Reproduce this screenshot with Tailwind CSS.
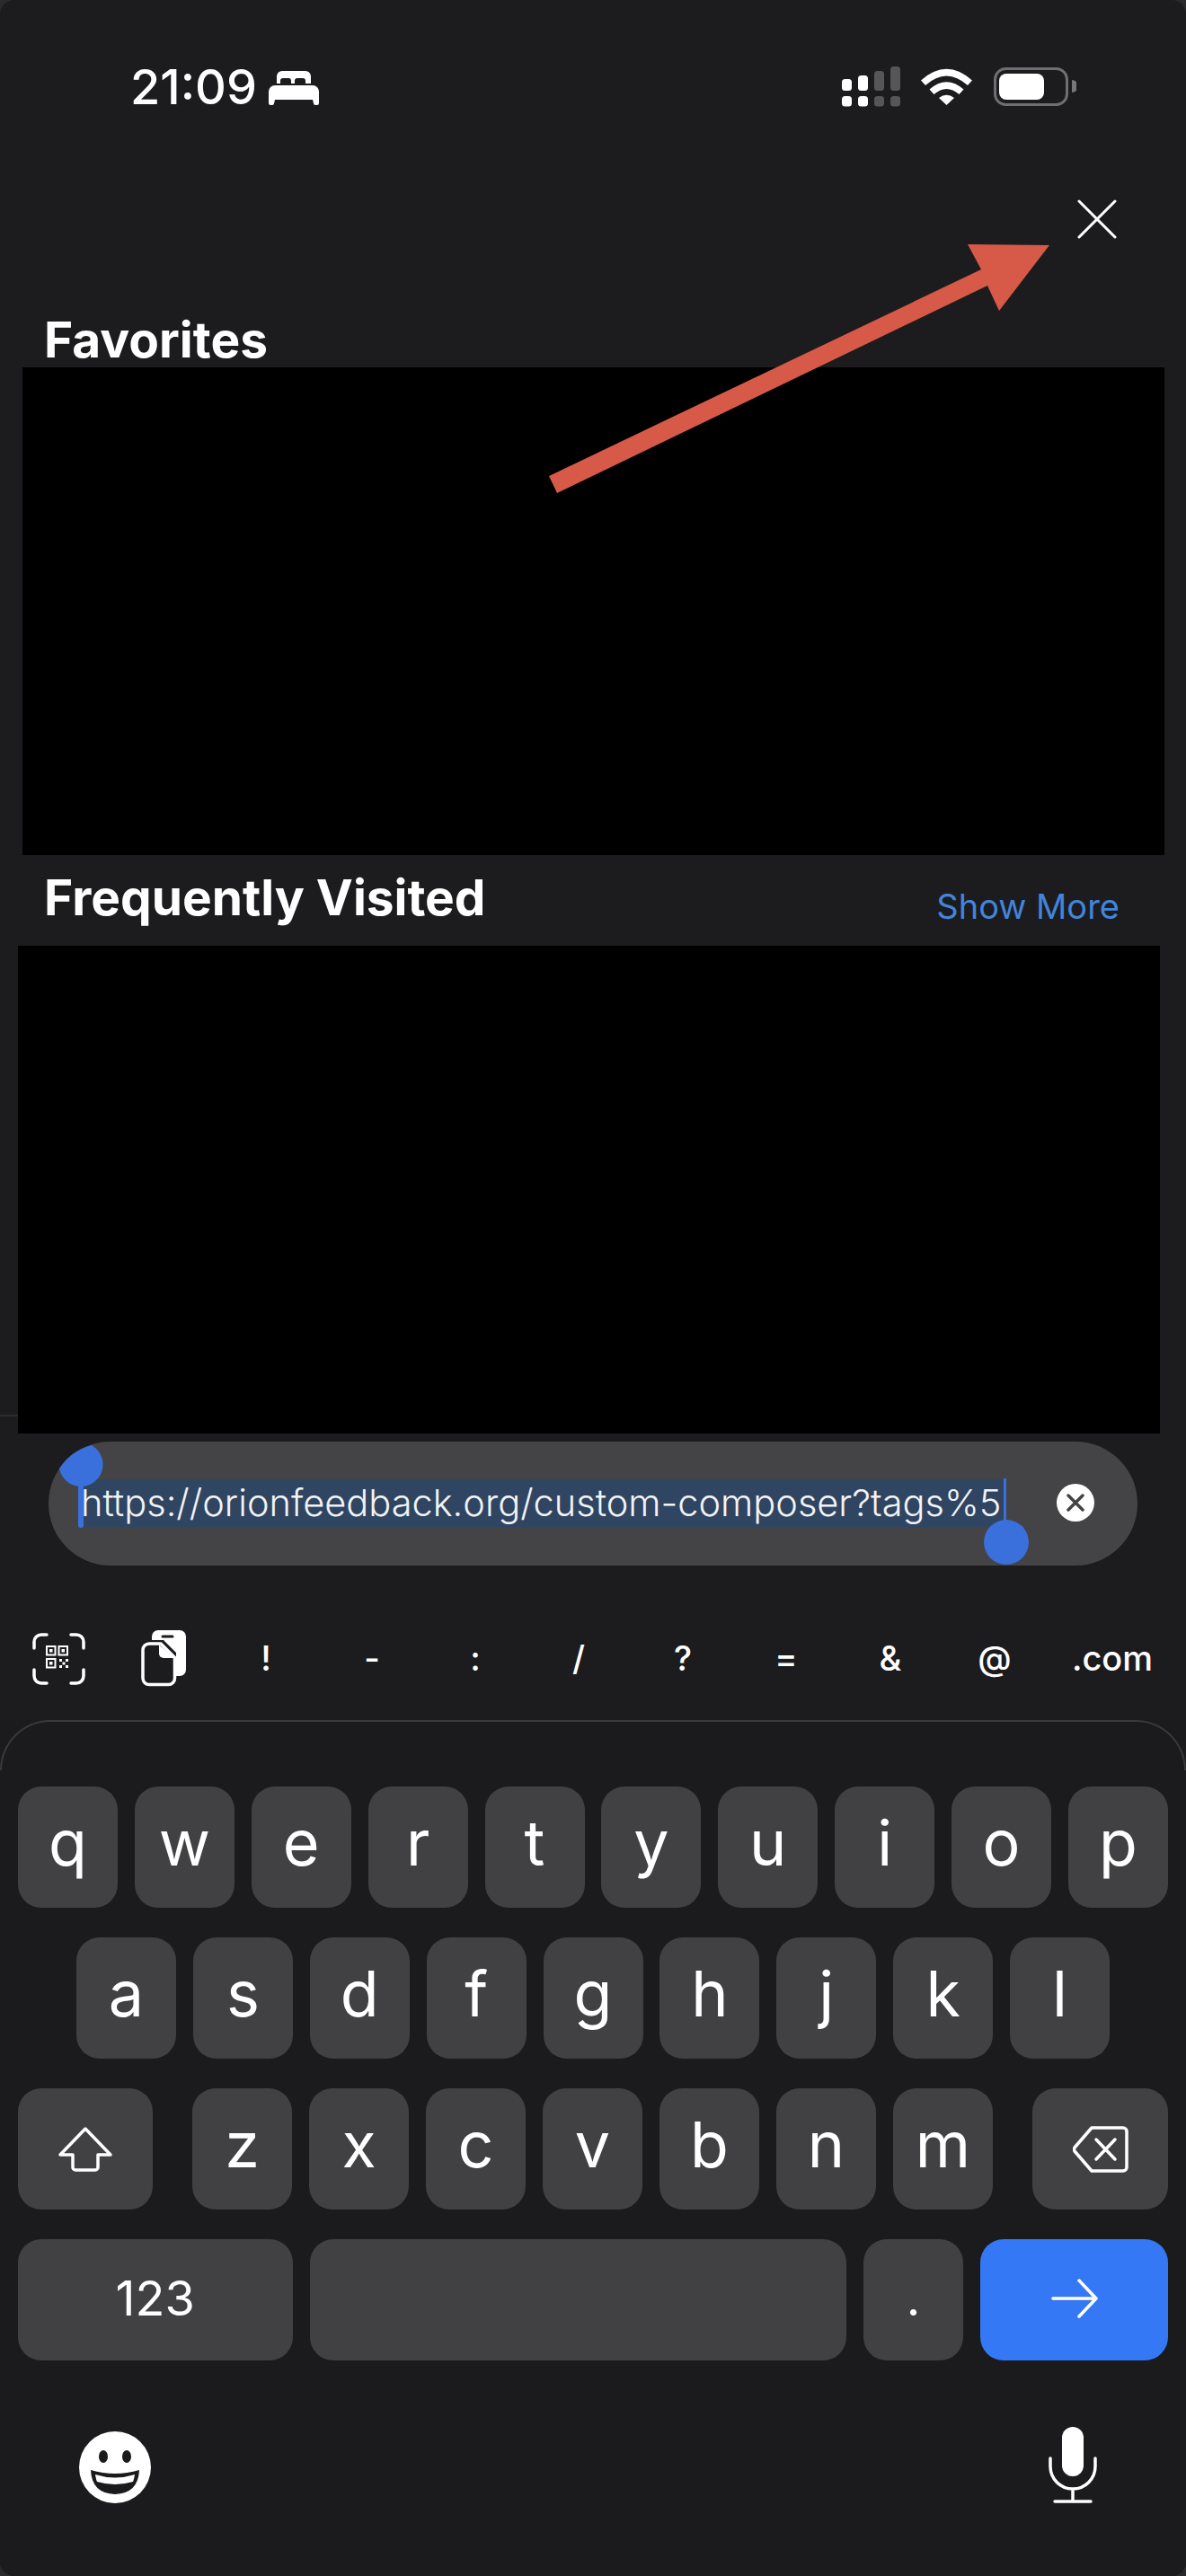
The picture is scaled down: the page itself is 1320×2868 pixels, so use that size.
<!DOCTYPE html>
<html lang="en">
<head>
    <meta charset="UTF-8">
    <meta name="viewport" content="width=device-width, initial-scale=1.0">
    <title>Orion start page</title>
    <script src="https://cdn.jsdelivr.net/npm/@tailwindcss/browser@4"></script>
</head>
<body class="bg-[#2a2a2c]">
    <div class="relative w-[1320px] h-[2868px] overflow-hidden rounded-[16px] bg-[#1c1c1e] text-white font-['Inter','Liberation_Sans',sans-serif]">

        <!-- status bar -->
        <div class="h-[200px] pt-[74px] pl-[145px] pr-[122px] flex items-start justify-between">
            <div class="flex items-start gap-[13px]">
                <span class="text-[54px] leading-[46px] font-medium">21:09</span>
                <svg class="w-[56px] h-[38px] mt-[5px]" viewBox="0 0 56 38" fill="#fff">
                    <path d="M9 14V6a6 6 0 0 1 6-6h26a6 6 0 0 1 6 6v8h-6v-3a3 3 0 0 0-3-3h-6a3 3 0 0 0-3 3v3h-4v-3a3 3 0 0 0-3-3h-6a3 3 0 0 0-3 3v3z"/>
                    <path d="M7 16h42a7 7 0 0 1 7 7v13a2 2 0 0 1-2 2h-2a2 2 0 0 1-2-2l-1-4H7l-1 4a2 2 0 0 1-2 2H2a2 2 0 0 1-2-2V23a7 7 0 0 1 7-7z"/>
                </svg>
            </div>
            <svg class="w-[262px] h-[46px]" viewBox="936 74 262 46">
                <g fill="#fff">
                    <rect x="937" y="88" width="11" height="13" rx="3.500"/><rect x="937" y="107" width="11" height="11.500" rx="3.500"/>
                    <rect x="955" y="84" width="11" height="17" rx="3.500"/><rect x="955" y="107" width="11" height="11.500" rx="3.500"/>
                </g>
                <g fill="#565658">
                    <rect x="973" y="79" width="11" height="22" rx="3.500"/><rect x="973" y="107" width="11" height="11.500" rx="3.500"/>
                    <rect x="991" y="74" width="11" height="27" rx="3.500"/><rect x="991" y="107" width="11" height="11.500" rx="3.500"/>
                </g>
                <g fill="#fff">
                    <path d="M1025 89.500 Q1053.500 64 1082 89.500 L1077 95 Q1053.500 74 1030 95z"/>
                    <path d="M1034.500 99.500 Q1053.500 83 1072.500 99.500 L1067.500 105 Q1053.500 93 1039.500 105z"/>
                    <path d="M1045 109 Q1053.500 102.500 1062 109 L1053.500 117z"/>
                </g>
                <rect x="1107.500" y="76.500" width="80" height="40" rx="12" fill="none" stroke="#6f6f71" stroke-width="3"/>
                <rect x="1112" y="82" width="50" height="29" rx="8" fill="#fff"/>
                <path d="M1193 89a7 7 0 0 1 0 14z" fill="#77777a"/>
            </svg>
        </div>

        <!-- close button -->
        <div class="h-[150px] flex justify-end pr-[77px] pt-[22px]">
            <svg class="w-[44px] h-[44px]" viewBox="0 0 44 44" fill="none" stroke="#fff" stroke-width="3" stroke-linecap="round">
                <path d="M2 2l40 40M42 2L2 42"/>
            </svg>
        </div>

        <h2 class="h-[59px] pl-[49px] text-[55px] leading-[56px] font-bold">Favorites</h2>
        <div class="ml-[25px] w-[1271px] h-[543px] bg-black"></div>

        <div class="h-[101px] pl-[49px] pr-[74px] flex items-start justify-between">
            <h2 class="pt-[17px] text-[55px] leading-[60px] font-bold">Frequently Visited</h2>
            <button class="pt-[33px] text-[38px] leading-[48px] text-[#4285dc]">Show More</button>
        </div>
        <div class="relative ml-[20px] w-[1271px] h-[543px] bg-black"></div>
        <div class="absolute left-0 top-[1575px] w-[20px] h-[2px] bg-[#2c2c2e]"></div>

        <!-- address field -->
        <div class="relative ml-[54px] mt-[9px] w-[1212px] h-[138px] rounded-[69px] bg-[#444345]">
            <div class="absolute left-[34px] top-[42px] w-[1030px] h-[53px] bg-[#2f4562]"></div>
            <div class="absolute left-[36px] top-[42px] h-[53px] leading-[53px] text-[41.5px] whitespace-nowrap text-[#f2f3f5] font-light">https://orionfeedback.org/custom-composer?tags%5</div>
            <svg class="absolute left-[10px] top-[2px] w-[70px] h-[100px]" viewBox="0 0 70 100">
                <path d="M2 28 Q15 8 38 2 A24.500 24.500 0 1 1 2 28z" fill="#3a70dc"/>
                <rect x="23" y="40" width="6" height="54" rx="3" fill="#3a70dc"/>
            </svg>
            <div class="absolute left-[1063px] top-[41px] w-[3px] h-[60px] bg-[#3a70dc]"></div>
            <div class="absolute left-[1041px] top-[87px] w-[50px] h-[50px] rounded-full bg-[#3a70dc]"></div>
            <div class="absolute left-[1122px] top-[47px] w-[42px] h-[42px] rounded-full bg-white flex items-center justify-center">
                <svg class="w-[20px] h-[20px]" viewBox="0 0 20 20" stroke="#444345" stroke-width="3.500" stroke-linecap="round"><path d="M2 2l16 16M18 2L2 18"/></svg>
            </div>
        </div>

        <!-- accessory row -->
        <div class="relative h-[172px]">
            <svg class="absolute left-[36px] top-[74px] w-[60px] h-[60px]" viewBox="0 0 60 60" fill="none" stroke="#fff">
                <path stroke-width="3.500" stroke-linecap="round" d="M16 3H10a8 8 0 0 0-8 8v7M43 3h6a8 8 0 0 1 8 8v7M16 57H10a8 8 0 0 1-8-8v-7M43 57h6a8 8 0 0 0 8-8v-7"/>
                <path stroke-width="2" d="M16 16h9.500v9.500H16zM29.500 16h9.500v9.500h-9.500zM16 30h9.500v9.500H16z"/>
                <path fill="#fff" stroke="none" d="M19 19h3.500v3.500H19zM32.500 19H36v3.500h-3.500zM19 33h3.500v3.500H19zM30 30h3v3h-3zM37 30h3v3h-3zM33.500 33.500h3v3h-3zM30 37h3v3h-3zM37 37h3v3h-3z"/>
            </svg>
            <svg class="absolute left-[156px] top-[70px] w-[54px] h-[66px]" viewBox="156 1813 54 66">
                <path fill="#fff" fill-rule="evenodd" d="M176 1815h24a7 7 0 0 1 7 7v37a7 7 0 0 1-7 7h-4v-26l-14-14h-13v-4a7 7 0 0 1 7-7zM181 1820.500a1.500 1.500 0 0 0 0 3h11a1.500 1.500 0 0 0 0-3z"/>
                <path fill="#1c1c1e" stroke="#fff" stroke-width="3.500" stroke-linejoin="round" d="M166 1830h13l15.500 15.500v23a7 7 0 0 1-7 7H166a7 7 0 0 1-7-7v-31.500a7 7 0 0 1 7-7z"/>
                <path fill="#fff" d="M177 1831v10a5 5 0 0 0 5 5h12z"/>
            </svg>
            <div class="absolute left-[250px] top-[79px] w-[1070px] h-[48px] text-[38px] leading-[48px] font-medium">
                <span class="absolute left-[36px] w-[20px] text-center">!</span>
                <span class="absolute left-[154px] w-[20px] text-center">-</span>
                <span class="absolute left-[269px] w-[20px] text-center">:</span>
                <span class="absolute left-[384px] w-[20px] text-center">/</span>
                <span class="absolute left-[490px] w-[40px] text-center">?</span>
                <span class="absolute left-[605px] w-[40px] text-center">=</span>
                <span class="absolute left-[721px] w-[40px] text-center">&amp;</span>
                <span class="absolute left-[832px] w-[50px] text-center">@</span>
                <span class="absolute left-[940px] w-[96px] text-center">.com</span>
            </div>
        </div>

        <!-- keyboard -->
        <div class="relative h-[953px] bg-[#1b1b1d] pt-[74px] px-[20px] text-[70px] font-normal">
            <div class="absolute left-0 right-0 top-0 h-[56px] rounded-t-[66px] border-x-2 border-t-2 border-[#3a3a3c]"></div>
            <div class="flex flex-col gap-[33px]">
                <div class="flex justify-between">
                    <div class="w-[111px] h-[135px] rounded-[26px] bg-[#414143] flex items-center justify-center pb-[11px]">q</div>
                    <div class="w-[111px] h-[135px] rounded-[26px] bg-[#414143] flex items-center justify-center pb-[11px]">w</div>
                    <div class="w-[111px] h-[135px] rounded-[26px] bg-[#414143] flex items-center justify-center pb-[11px]">e</div>
                    <div class="w-[111px] h-[135px] rounded-[26px] bg-[#414143] flex items-center justify-center pb-[11px]">r</div>
                    <div class="w-[111px] h-[135px] rounded-[26px] bg-[#414143] flex items-center justify-center pb-[11px]">t</div>
                    <div class="w-[111px] h-[135px] rounded-[26px] bg-[#414143] flex items-center justify-center pb-[11px]">y</div>
                    <div class="w-[111px] h-[135px] rounded-[26px] bg-[#414143] flex items-center justify-center pb-[11px]">u</div>
                    <div class="w-[111px] h-[135px] rounded-[26px] bg-[#414143] flex items-center justify-center pb-[11px]">i</div>
                    <div class="w-[111px] h-[135px] rounded-[26px] bg-[#414143] flex items-center justify-center pb-[11px]">o</div>
                    <div class="w-[111px] h-[135px] rounded-[26px] bg-[#414143] flex items-center justify-center pb-[11px]">p</div>
                </div>
                <div class="flex justify-between px-[65px]">
                    <div class="w-[111px] h-[135px] rounded-[26px] bg-[#414143] flex items-center justify-center pb-[11px]">a</div>
                    <div class="w-[111px] h-[135px] rounded-[26px] bg-[#414143] flex items-center justify-center pb-[11px]">s</div>
                    <div class="w-[111px] h-[135px] rounded-[26px] bg-[#414143] flex items-center justify-center pb-[11px]">d</div>
                    <div class="w-[111px] h-[135px] rounded-[26px] bg-[#414143] flex items-center justify-center pb-[11px]">f</div>
                    <div class="w-[111px] h-[135px] rounded-[26px] bg-[#414143] flex items-center justify-center pb-[11px]">g</div>
                    <div class="w-[111px] h-[135px] rounded-[26px] bg-[#414143] flex items-center justify-center pb-[11px]">h</div>
                    <div class="w-[111px] h-[135px] rounded-[26px] bg-[#414143] flex items-center justify-center pb-[11px]">j</div>
                    <div class="w-[111px] h-[135px] rounded-[26px] bg-[#414143] flex items-center justify-center pb-[11px]">k</div>
                    <div class="w-[111px] h-[135px] rounded-[26px] bg-[#414143] flex items-center justify-center pb-[11px]">l</div>
                </div>
                <div class="flex justify-between">
                    <div class="w-[150px] h-[135px] rounded-[26px] bg-[#414143] flex items-center justify-center">
                        <svg class="w-[62px] h-[52px]" viewBox="0 0 62 52" fill="none" stroke="#fff" stroke-width="3.500" stroke-linejoin="round"><path d="M31 3L3 32h14v14a3 3 0 0 0 3 3h22a3 3 0 0 0 3-3V32h14z"/></svg>
                    </div>
                    <div class="flex gap-[19px]">
                        <div class="w-[111px] h-[135px] rounded-[26px] bg-[#414143] flex items-center justify-center pb-[11px]">z</div>
                        <div class="w-[111px] h-[135px] rounded-[26px] bg-[#414143] flex items-center justify-center pb-[11px]">x</div>
                        <div class="w-[111px] h-[135px] rounded-[26px] bg-[#414143] flex items-center justify-center pb-[11px]">c</div>
                        <div class="w-[111px] h-[135px] rounded-[26px] bg-[#414143] flex items-center justify-center pb-[11px]">v</div>
                        <div class="w-[111px] h-[135px] rounded-[26px] bg-[#414143] flex items-center justify-center pb-[11px]">b</div>
                        <div class="w-[111px] h-[135px] rounded-[26px] bg-[#414143] flex items-center justify-center pb-[11px]">n</div>
                        <div class="w-[111px] h-[135px] rounded-[26px] bg-[#414143] flex items-center justify-center pb-[11px]">m</div>
                    </div>
                    <div class="w-[151px] h-[135px] rounded-[26px] bg-[#414143] flex items-center justify-center">
                        <svg class="w-[62px] h-[52px]" viewBox="0 0 62 52" fill="none" stroke="#fff" stroke-width="3.500" stroke-linecap="round" stroke-linejoin="round"><path d="M21 2h35a4 4 0 0 1 4 4v40a4 4 0 0 1-4 4H21L2 28a4 4 0 0 1 0-4z"/><path d="M26 15l21 22M47 15L26 37"/></svg>
                    </div>
                </div>
                <div class="flex gap-[19px]">
                    <div class="w-[306px] h-[135px] rounded-[26px] bg-[#414143] flex items-center justify-center text-[54px] pb-[4px]">123</div>
                    <div class="w-[598px] h-[135px] rounded-[26px] bg-[#414143]"></div>
                    <div class="w-[112px] h-[135px] rounded-[26px] bg-[#414143] flex items-center justify-center text-[54px] pb-[4px]">.</div>
                    <div class="w-[209px] h-[135px] rounded-[26px] bg-[#3478f6] flex items-center justify-center pb-[4px]">
                        <svg class="w-[52px] h-[44px]" viewBox="0 0 52 44" fill="none" stroke="#fff" stroke-width="3.500" stroke-linecap="round" stroke-linejoin="round"><path d="M2 22h48M31 2l19 20-19 20"/></svg>
                    </div>
                </div>
            </div>
            <div class="flex justify-between pl-[67px] pr-[78px] pt-[78px]">
                <svg class="w-[82px] h-[82px]" viewBox="0 0 82 82">
                    <circle cx="41" cy="41" r="40" fill="#fff"/>
                    <ellipse cx="28" cy="29" rx="5" ry="7" fill="#1b1b1d"/><ellipse cx="54" cy="29" rx="5" ry="7" fill="#1b1b1d"/>
                    <path d="M14 44 Q41 52 68 44 Q67 70 41 71 Q15 70 14 44z" fill="#1b1b1d"/>
                    <path d="M19 49 Q41 56 63 49 Q62 55 61 57 Q41 63 21 57 Q20 55 19 49z" fill="#fff"/>
                </svg>
                <svg class="w-[56px] h-[86px] -mt-[5px]" viewBox="0 0 56 86" fill="none" stroke="#fff" stroke-width="3.500" stroke-linecap="round">
                    <rect x="16" y="1" width="24" height="55" rx="12" fill="#fff" stroke="none"/>
                    <path d="M3 36v9a25 25 0 0 0 50 0v-9M28 70v13M8 84h40"/>
                </svg>
            </div>
        </div>

        <!-- annotation arrow -->
        <svg class="absolute left-0 top-0 w-[1320px] h-[600px] pointer-events-none" viewBox="0 0 1320 600">
            <polygon points="611,530 620,549 1099,318 1112,346 1168,273 1077,272 1092,300" fill="#d65a47"/>
        </svg>
    </div>
</body>
</html>
